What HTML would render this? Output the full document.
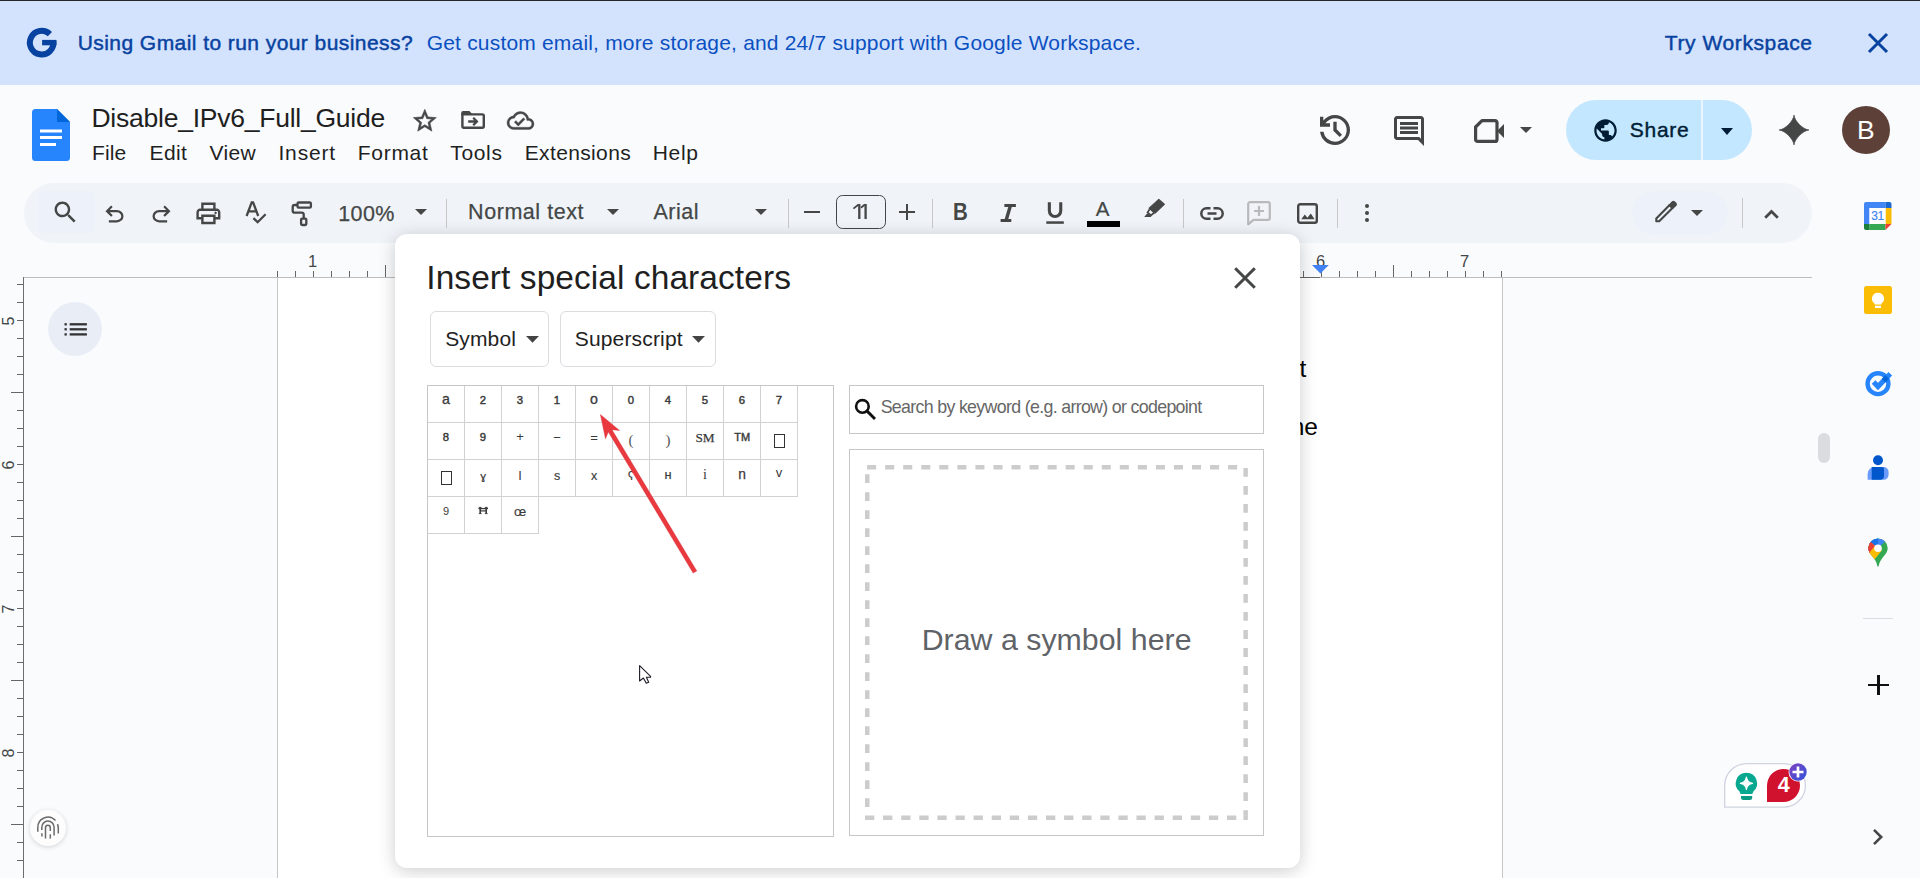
<!DOCTYPE html>
<html><head><meta charset="utf-8"><title>Disable_IPv6_Full_Guide - Google Docs</title>
<style>
html,body{margin:0;padding:0;}
body{width:1920px;height:878px;overflow:hidden;position:relative;background:#f9fbfd;font-family:"Liberation Sans",sans-serif;color:#1f1f1f;}
.abs{position:absolute;}
.t{position:absolute;white-space:nowrap;line-height:1;}
svg{position:absolute;overflow:visible;}
</style></head><body>

<div class="abs" style="left:0;top:0;width:1920px;height:85px;background:#d3e3fd;"></div>
<div class="abs" style="left:0;top:0;width:1920px;height:1px;background:#262626;"></div>
<svg style="left:0;top:0;" width="80" height="80"><path d="M49.900 34.200A11.800 11.800 0 1 0 53.350 40.900" fill="none" stroke="#0842a0" stroke-width="6"/><rect x="42.100" y="39.900" width="14.300" height="5.400" fill="#0842a0"/></svg>
<div class="t" id="b1" style="left:77.74px;top:32.22px;font-size:21px;color:#0842a0;letter-spacing:0.434px;-webkit-text-stroke:0.45px #0842a0;">Using Gmail to run your business?</div>
<div class="t" id="b2" style="left:426.74px;top:32.22px;font-size:21px;color:#0b50c0;letter-spacing:0.186px;">Get custom email, more storage, and 24/7 support with Google Workspace.</div>
<div class="t" id="b3" style="left:1664.74px;top:31.72px;font-size:21px;color:#0842a0;letter-spacing:0.598px;-webkit-text-stroke:0.45px #0842a0;">Try Workspace</div>
<svg style="left:1868px;top:33px;" width="20" height="20" viewBox="0 0 20 20"><path d="M1 1L19 19M19 1L1 19" stroke="#0842a0" stroke-width="3" fill="none"/></svg>
<svg style="left:32px;top:109px;" width="38" height="52" viewBox="0 0 38 52">
<path d="M3.500 0H25L38 13V48.500A3.500 3.500 0 0 1 34.500 52H3.500A3.500 3.500 0 0 1 0 48.500V3.500A3.500 3.500 0 0 1 3.500 0Z" fill="#2684fc"/>
<path d="M25 0L38 13H25Z" fill="#0066da"/>
<rect x="8" y="20.500" width="22" height="3" fill="#fff"/><rect x="8" y="27" width="22" height="3" fill="#fff"/><rect x="8" y="34" width="16" height="3" fill="#fff"/>
</svg>
<div class="t" id="title" style="left:91.41px;top:105.07px;font-size:26.5px;color:#1f1f1f;letter-spacing:-0.235px;">Disable_IPv6_Full_Guide</div>
<div class="t" id="m0" style="left:92.04px;top:141.92px;font-size:21px;color:#1f1f1f;letter-spacing:0.117px;">File</div>
<div class="t" id="m1" style="left:149.54px;top:141.92px;font-size:21px;color:#1f1f1f;letter-spacing:0.406px;">Edit</div>
<div class="t" id="m2" style="left:209.54px;top:141.92px;font-size:21px;color:#1f1f1f;letter-spacing:0.342px;">View</div>
<div class="t" id="m3" style="left:278.44px;top:141.92px;font-size:21px;color:#1f1f1f;letter-spacing:0.846px;">Insert</div>
<div class="t" id="m4" style="left:357.74px;top:141.92px;font-size:21px;color:#1f1f1f;letter-spacing:0.716px;">Format</div>
<div class="t" id="m5" style="left:450.24px;top:141.92px;font-size:21px;color:#1f1f1f;letter-spacing:0.656px;">Tools</div>
<div class="t" id="m6" style="left:524.74px;top:141.92px;font-size:21px;color:#1f1f1f;letter-spacing:0.358px;">Extensions</div>
<div class="t" id="m7" style="left:652.74px;top:141.92px;font-size:21px;color:#1f1f1f;letter-spacing:0.652px;">Help</div>
<svg style="left:411.300px;top:107px;" width="27.600" height="27.600" viewBox="0 0 24 24"><path fill="#444746" stroke="#444746" stroke-width="0.500" d="M22 9.24l-7.19-.62L12 2 9.19 8.63 2 9.24l5.46 4.73L5.82 21 12 17.27 18.18 21l-1.63-7.030L22 9.240zM12 15.400l-3.760 2.270 1-4.280-3.320-2.880 4.380-.380L12 6.100l1.710 4.040 4.380.380-3.320 2.880 1 4.280L12 15.400z"/></svg>
<svg style="left:0;top:0;" width="600" height="200"><path d="M462.400 114.400H482.300A1.500 1.500 0 0 1 483.800 115.900V126.200A1.500 1.500 0 0 1 482.300 127.700H463.900A1.500 1.500 0 0 1 462.400 126.200Z" fill="none" stroke="#444746" stroke-width="2.400"/><path d="M461.200 115V113A1.900 1.900 0 0 1 463.100 111.100H469.300L472.800 114.600V115Z" fill="#444746"/><path d="M468.200 121.500H476M473.200 117.800L476.900 121.500L473.200 125.200" fill="none" stroke="#444746" stroke-width="2.300"/></svg>
<svg style="left:507.400px;top:107.200px;" width="27" height="27" viewBox="0 0 24 24"><path fill="#444746" stroke="#444746" stroke-width="0.300" d="M19.35 10.04C18.67 6.59 15.64 4 12 4 9.11 4 6.6 5.64 5.35 8.04 2.34 8.36 0 10.91 0 14c0 3.31 2.69 6 6 6h13c2.76 0 5-2.24 5-5 0-2.64-2.05-4.78-4.65-4.96zM19 18H6c-2.21 0-4-1.79-4-4 0-2.05 1.53-3.76 3.56-3.97l1.07-.11.5-.95C8.08 7.140 9.940 6 12 6c2.620 0 4.880 1.860 5.390 4.430l.3 1.500 1.530.110c1.560.100 2.780 1.410 2.780 2.960 0 1.650-1.350 3-3 3zm-9-3.820l-2.090-2.090L6.500 13.500 10 17l6.010-6.010-1.410-1.410z"/></svg>
<svg style="left:1315px;top:110px;" width="40" height="40" viewBox="0 0 24 24"><path fill="#444746" d="M12 21q-3.45 0-6.012-2.287T3.050 13H5.100q.35 2.600 2.313 4.300T12 19q2.925 0 4.963-2.037T19 12t-2.037-4.963T12 5q-1.725 0-3.225.800T6.250 8H9v2H3V4h2v2.350q1.275-1.600 3.113-2.475T12 3q1.875 0 3.513.713t2.850 1.924 1.925 2.850T21 12t-.712 3.513-1.925 2.850-2.850 1.925T12 21m2.800-4.800L11 12.400V7h2v4.600l3.200 3.200z"/></svg>
<svg style="left:1391px;top:113px;" width="36" height="36" viewBox="0 0 24 24"><path fill="#444746" d="M6 14h12v-2H6zm0-3h12V9H6zm0-3h12V6H6zM22 22l-4-4H4q-.825 0-1.412-.587T2 16V4q0-.825.588-1.412T4 2h16q.825 0 1.413.588T22 4zM4 16h14.850L20 17.125V4H4z"/></svg>
<svg style="left:1474px;top:119px;" width="30" height="24" viewBox="0 0 30 24"><path d="M8 1.600H21A2 2 0 0 1 23 3.600V20.400A2 2 0 0 1 21 22.400H3.600A2 2 0 0 1 1.600 20.400V8Z" fill="none" stroke="#444746" stroke-width="3.200" stroke-linejoin="round"/><path d="M23 12L30 5V19Z" fill="#444746"/></svg>
<svg style="left:1520px;top:127px;" width="12" height="6" viewBox="0 0 12 6"><path d="M0 0H12L6 6Z" fill="#444746"/></svg>
<div class="abs" style="left:1566px;top:100px;width:186px;height:60px;border-radius:30px;background:#c2e7ff;"></div>
<div class="abs" style="left:1701px;top:100px;width:1.5px;height:60px;background:#eaf5ff;"></div>
<svg style="left:1591.5px;top:116.500px;" width="27" height="27" viewBox="0 0 24 24"><path fill="#001d35" d="M12 2C6.480 2 2 6.480 2 12s4.480 10 10 10 10-4.480 10-10S17.520 2 12 2zM4 12c0-.61.080-1.210.210-1.780L8.990 15v1c0 1.100.9 2 2 2v1.930C7.060 19.430 4 16.070 4 12zm13.890 5.400c-.26-.81-1-1.400-1.900-1.400h-1v-3c0-.55-.45-1-1-1h-6v-2h2c.55 0 1-.45 1-1V7h2c1.100 0 2-.9 2-2v-.410C17.920 5.770 20 8.650 20 12c0 2.080-.810 3.980-2.110 5.400z"/></svg>
<div class="t" id="share" style="left:1629.74px;top:118.72px;font-size:21px;color:#001d35;letter-spacing:0.733px;-webkit-text-stroke:0.4px #001d35;">Share</div>
<svg style="left:1721px;top:127.500px;" width="12" height="7" viewBox="0 0 12 7"><path d="M0 0H12L6 7Z" fill="#001d35"/></svg>
<svg style="left:1779px;top:115px;" width="30" height="30" viewBox="0 0 30 30"><path d="M15 0C15.90 6.40 23.60 14.10 30.00 15.00C23.60 15.90 15.90 23.60 15.00 30.00C14.10 23.60 6.40 15.90 0.00 15.00C6.40 14.10 14.10 6.40 15.00 0.00Z" fill="#444746" stroke="#444746" stroke-width="0.6" stroke-linejoin="round"/></svg>
<div class="abs" style="left:1842px;top:106px;width:48px;height:48px;border-radius:24px;background:#5d4037;"></div>
<div class="t" id="avB" style="left:1856.91px;top:117.27px;font-size:26.5px;color:#ffffff;letter-spacing:-0.273px;">B</div>
<div class="abs" style="left:24px;top:183px;width:1788px;height:60px;border-radius:30px;background:#f0f4f9;"></div>
<div class="abs" style="left:38px;top:191px;width:57px;height:42px;border-radius:6px;background:#edf2fa;"></div>
<div class="abs" style="left:1632px;top:191px;width:96px;height:44px;border-radius:22px;background:#edf2fa;"></div>
<svg style="left:51px;top:198px;" width="28.8" height="28.8" viewBox="0 0 24 24"><path fill="#444746"  d="M15.5 14h-.79l-.28-.27C15.41 12.59 16 11.11 16 9.5 16 5.91 13.09 3 9.5 3S3 5.91 3 9.5 5.91 16 9.5 16c1.61 0 3.09-.59 4.23-1.57l.27.28v.79l5 4.99L20.49 19l-4.99-5zm-6 0C7.01 14 5 11.99 5 9.5S7.01 5 9.5 5 14 7.01 14 9.5 11.990 14 9.500 14z"/></svg>
<svg style="left:100.9px;top:200.8px;" width="27" height="27" viewBox="0 0 24 24"><path fill="#444746"  d="M7 19v-2h7.1q1.575 0 2.737-1Q18 15 18 13.5T16.837 11Q15.675 10 14.1 10H7.8l2.6 2.6L9 14 4 9l5-5 1.4 1.4L7.8 8h6.3q2.425 0 4.163 1.575Q20 11.15 20 13.5q0 2.350-1.737 3.925Q16.525 19 14.100 19z"/></svg>
<svg style="left:148.4px;top:200.8px;" width="27" height="27" viewBox="0 0 24 24"><path fill="#444746"  d="M9.9 19q-2.425 0-4.163-1.575Q4 15.85 4 13.5q0-2.35 1.737-3.925Q7.475 8 9.9 8h6.3l-2.600-2.600L15 4l5 5-5 5-1.400-1.400 2.600-2.600H9.900q-1.575 0-2.737 1Q6 12 6 13.500T7.163 16q1.162 1 2.737 1H17v2z"/></svg>
<svg style="left:194.3px;top:199.09px;" width="28.8" height="28.8" viewBox="0 0 24 24"><path fill="#444746"  d="M16 8V5H8v3H6V3h12v5zM4 10h16H6zm14 2.5q.425 0 .713-.288T19 11.500t-.288-.712T18 10.500t-.712.288T17 11.500t.288.712.712.288M16 19v-4H8v4zm2 2H6v-4H2v-6q0-1.275.875-2.137T5 8h14q1.275 0 2.138.863T22 11v6h-4zm2-6v-4q0-.425-.288-.712T19 10H5q-.425 0-.712.288T4 11v4h2v-2h12v2z"/></svg>
<svg style="left:0;top:0;" width="400" height="260" fill="none" stroke="#444746" stroke-width="2.300"><path d="M246.600 216L251.700 202.300H253.100L258.200 216M248.600 211.300H256.200" stroke-linejoin="miter"/><path d="M253.400 218.200L257.600 222.200L265.600 214.200"/></svg>
<svg style="left:0;top:0;" width="400" height="260" fill="none" stroke="#444746" stroke-width="2.300"><rect x="297.500" y="202.500" width="13.400" height="5.200" rx="1.200"/><path d="M297.500 205H294.700A2 2 0 0 0 292.700 207V210.700A2 2 0 0 0 294.700 212.700H301.700A2 2 0 0 1 303.700 214.700V218"/><rect x="301.100" y="218.600" width="5.200" height="6.400" rx="1"/></svg>
<div class="t" id="zoom" style="left:338.31px;top:203.50px;font-size:21.5px;color:#444746;letter-spacing:0.366px;-webkit-text-stroke:0.25px #444746;">100%</div>
<svg style="left:414.5px;top:208.5px;" width="12" height="6" viewBox="0 0 12 6"><path d="M0 0H12L6 6Z" fill="#444746"/></svg>
<div class="abs" style="left:445.65px;top:198.5px;width:1.500px;height:29px;background:#c7c7c7;"></div>
<div class="t" id="ntext" style="left:468.11px;top:202.10px;font-size:21.5px;color:#444746;letter-spacing:0.549px;-webkit-text-stroke:0.25px #444746;">Normal text</div>
<svg style="left:606.7px;top:208.5px;" width="12" height="6" viewBox="0 0 12 6"><path d="M0 0H12L6 6Z" fill="#444746"/></svg>
<div class="t" id="arial" style="left:653.51px;top:202.10px;font-size:21.5px;color:#444746;letter-spacing:0.510px;-webkit-text-stroke:0.25px #444746;">Arial</div>
<svg style="left:754.7px;top:208.5px;" width="12" height="6" viewBox="0 0 12 6"><path d="M0 0H12L6 6Z" fill="#444746"/></svg>
<div class="abs" style="left:787.65px;top:198.5px;width:1.500px;height:29px;background:#c7c7c7;"></div>
<div class="abs" style="left:804px;top:210.750px;width:16px;height:2.300px;background:#444746;"></div>
<div class="abs" style="left:836px;top:195.250px;width:47.500px;height:32px;border:1.500px solid #444746;border-radius:6.500px;"></div>
<svg style="left:0;top:0;" width="1200" height="260" fill="none" stroke="#444746"><path d="M853.400 208.600L858.600 204.500M860.900 207.700L864.900 204.500" stroke-width="1.800"/><path d="M859.300 203.900V219M865.600 203.900V219" stroke-width="2.300"/></svg>
<div class="abs" style="left:899.400px;top:210.900px;width:15.400px;height:2.300px;background:#444746;"></div>
<div class="abs" style="left:905.950px;top:204.400px;width:2.300px;height:15.400px;background:#444746;"></div>
<div class="abs" style="left:931.85px;top:198.5px;width:1.500px;height:29px;background:#c7c7c7;"></div>
<div class="t" id="tbB" style="left:953.372px;top:200.25px;font-size:23.8px;color:#444746;letter-spacing:0.000px;font-weight:bold;transform:scaleX(0.860);transform-origin:0 0;">B</div>
<svg style="left:0;top:0;" width="1200" height="260" fill="none" stroke="#444746"><path d="M1004.400 205.450H1015.900M1000.600 220.450H1011.300" stroke-width="2.900"/><path d="M1010.600 205L1005.900 221" stroke-width="3.400"/><path d="M1049.350 202.300V210.800A5.700 5.700 0 0 0 1060.750 210.800V202.300" stroke-width="3.100"/><path d="M1046.300 222.550H1063.800" stroke-width="2.500"/></svg>
<div class="t" id="tbA" style="left:1095.77px;top:198.65px;font-size:20.5px;color:#444746;letter-spacing:0.000px;-webkit-text-stroke:0.2px #444746;">A</div>
<div class="abs" style="left:1087px;top:221px;width:33px;height:5.600px;background:#000;"></div>
<svg style="left:0;top:0;" width="1300" height="260"><path d="M1158.800 199.400L1164.300 204.300L1154.800 213.200L1149.200 208.200Z" fill="#444746" stroke="#444746" stroke-width="1.200" stroke-linejoin="round"/><path d="M1149.600 209.200L1147.600 212.300L1150.900 215.300L1153.800 213" fill="none" stroke="#444746" stroke-width="1.700"/><path d="M1147.200 213.200L1144.200 216.900H1150.800L1151.300 216Z" fill="#444746"/></svg>
<div class="abs" style="left:1182.75px;top:198.5px;width:1.500px;height:29px;background:#c7c7c7;"></div>
<svg style="left:1200px;top:206.500px;" width="24" height="13" viewBox="0 0 24 13"><path d="M10.500 1.300H6.500A5.200 5.200 0 0 0 6.500 11.700H10.500M13.500 1.300H17.500A5.200 5.200 0 0 1 17.500 11.700H13.500M7.500 6.500H16.500" fill="none" stroke="#444746" stroke-width="2.500"/></svg>
<svg style="left:1247px;top:201px;" width="24" height="24" viewBox="0 0 24 24"><path d="M1.200 3A1.800 1.800 0 0 1 3 1.200H21A1.800 1.800 0 0 1 22.800 3V17A1.800 1.800 0 0 1 21 18.800H6.500L1.200 23.300Z" fill="none" stroke="#b7b9ba" stroke-width="2.200" stroke-linejoin="round"/><path d="M12 5V15M7 10H17" stroke="#b7b9ba" stroke-width="2.200"/></svg>
<svg style="left:1297px;top:202.500px;" width="21" height="21" viewBox="0 0 21 21"><rect x="1.200" y="1.200" width="18.600" height="18.600" rx="2" fill="none" stroke="#444746" stroke-width="2.400"/><path d="M4.200 16.300L7.800 11.600L10.400 14.800L13.800 10.400L17.600 16.300Z" fill="#444746"/></svg>
<div class="abs" style="left:1336.85px;top:198.5px;width:1.500px;height:29px;background:#c7c7c7;"></div>
<div class="abs" style="left:1364.700px;top:203.7px;width:4.600px;height:4.600px;border-radius:2.300px;background:#444746;"></div>
<div class="abs" style="left:1364.700px;top:210.7px;width:4.600px;height:4.600px;border-radius:2.300px;background:#444746;"></div>
<div class="abs" style="left:1364.700px;top:217.7px;width:4.600px;height:4.600px;border-radius:2.300px;background:#444746;"></div>
<svg style="left:0;top:0;" width="1800" height="260"><path d="M1656.300 218.400L1669.600 205.100L1672.500 208L1659.200 221.300H1656.300Z" fill="none" stroke="#444746" stroke-width="2.100" stroke-linejoin="round"/><path d="M1669.600 205.100L1672.500 202.200A1.300 1.300 0 0 1 1674.300 202.200L1675.600 203.500A1.300 1.300 0 0 1 1675.600 205.300L1672.500 208Z" fill="#444746" stroke="#444746" stroke-width="2"  stroke-linejoin="round"/></svg>
<svg style="left:1691px;top:210px;" width="12" height="6" viewBox="0 0 12 6"><path d="M0 0H12L6 6Z" fill="#444746"/></svg>
<div class="abs" style="left:1741.75px;top:198px;width:1.500px;height:30px;background:#c7c7c7;"></div>
<svg style="left:1764px;top:209px;" width="15" height="10" viewBox="0 0 15 10"><path d="M1.200 8.800L7.500 2.500L13.800 8.800" fill="none" stroke="#444746" stroke-width="2.700"/></svg>
<div class="abs" style="left:278px;top:278px;width:1224px;height:600px;background:#fff;"></div>
<div class="abs" style="left:277px;top:278px;width:1px;height:600px;background:#c4c7c5;"></div>
<div class="abs" style="left:1502px;top:278px;width:1px;height:600px;background:#c4c7c5;"></div>
<div class="abs" style="left:23px;top:277px;width:1789px;height:1px;background:#bdbdbd;"></div>
<div class="abs" style="left:23px;top:277px;width:1px;height:601px;background:#6e6e6e;"></div>
<svg style="left:0;top:0;" width="1920" height="878" fill="#666" shape-rendering="crispEdges"><rect x="277" y="271" width="1" height="6"/><rect x="295" y="271" width="1" height="6"/><rect x="313" y="271" width="1" height="6"/><rect x="331" y="271" width="1" height="6"/><rect x="349" y="271" width="1" height="6"/><rect x="367" y="271" width="1" height="6"/><rect x="385" y="265" width="1" height="12"/><rect x="403" y="271" width="1" height="6"/><rect x="421" y="271" width="1" height="6"/><rect x="439" y="271" width="1" height="6"/><rect x="457" y="271" width="1" height="6"/><rect x="475" y="271" width="1" height="6"/><rect x="493" y="271" width="1" height="6"/><rect x="511" y="271" width="1" height="6"/><rect x="529" y="265" width="1" height="12"/><rect x="547" y="271" width="1" height="6"/><rect x="565" y="271" width="1" height="6"/><rect x="583" y="271" width="1" height="6"/><rect x="601" y="271" width="1" height="6"/><rect x="619" y="271" width="1" height="6"/><rect x="637" y="271" width="1" height="6"/><rect x="655" y="271" width="1" height="6"/><rect x="673" y="265" width="1" height="12"/><rect x="691" y="271" width="1" height="6"/><rect x="709" y="271" width="1" height="6"/><rect x="727" y="271" width="1" height="6"/><rect x="745" y="271" width="1" height="6"/><rect x="763" y="271" width="1" height="6"/><rect x="781" y="271" width="1" height="6"/><rect x="799" y="271" width="1" height="6"/><rect x="817" y="265" width="1" height="12"/><rect x="835" y="271" width="1" height="6"/><rect x="853" y="271" width="1" height="6"/><rect x="871" y="271" width="1" height="6"/><rect x="889" y="271" width="1" height="6"/><rect x="907" y="271" width="1" height="6"/><rect x="925" y="271" width="1" height="6"/><rect x="943" y="271" width="1" height="6"/><rect x="961" y="265" width="1" height="12"/><rect x="979" y="271" width="1" height="6"/><rect x="997" y="271" width="1" height="6"/><rect x="1015" y="271" width="1" height="6"/><rect x="1033" y="271" width="1" height="6"/><rect x="1051" y="271" width="1" height="6"/><rect x="1069" y="271" width="1" height="6"/><rect x="1087" y="271" width="1" height="6"/><rect x="1105" y="265" width="1" height="12"/><rect x="1123" y="271" width="1" height="6"/><rect x="1141" y="271" width="1" height="6"/><rect x="1159" y="271" width="1" height="6"/><rect x="1177" y="271" width="1" height="6"/><rect x="1195" y="271" width="1" height="6"/><rect x="1213" y="271" width="1" height="6"/><rect x="1231" y="271" width="1" height="6"/><rect x="1249" y="265" width="1" height="12"/><rect x="1267" y="271" width="1" height="6"/><rect x="1285" y="271" width="1" height="6"/><rect x="1303" y="271" width="1" height="6"/><rect x="1321" y="271" width="1" height="6"/><rect x="1339" y="271" width="1" height="6"/><rect x="1357" y="271" width="1" height="6"/><rect x="1375" y="271" width="1" height="6"/><rect x="1393" y="265" width="1" height="12"/><rect x="1411" y="271" width="1" height="6"/><rect x="1429" y="271" width="1" height="6"/><rect x="1447" y="271" width="1" height="6"/><rect x="1465" y="271" width="1" height="6"/><rect x="1483" y="271" width="1" height="6"/><rect x="1501" y="271" width="1" height="6"/></svg>
<svg style="left:0;top:0;" width="1920" height="878" fill="#666" shape-rendering="crispEdges"><rect x="17" y="284" width="6" height="1"/><rect x="17" y="302" width="6" height="1"/><rect x="17" y="320" width="6" height="1"/><rect x="17" y="338" width="6" height="1"/><rect x="17" y="356" width="6" height="1"/><rect x="17" y="374" width="6" height="1"/><rect x="11" y="392" width="12" height="1"/><rect x="17" y="410" width="6" height="1"/><rect x="17" y="428" width="6" height="1"/><rect x="17" y="446" width="6" height="1"/><rect x="17" y="464" width="6" height="1"/><rect x="17" y="482" width="6" height="1"/><rect x="17" y="500" width="6" height="1"/><rect x="17" y="518" width="6" height="1"/><rect x="11" y="536" width="12" height="1"/><rect x="17" y="554" width="6" height="1"/><rect x="17" y="572" width="6" height="1"/><rect x="17" y="590" width="6" height="1"/><rect x="17" y="608" width="6" height="1"/><rect x="17" y="626" width="6" height="1"/><rect x="17" y="644" width="6" height="1"/><rect x="17" y="662" width="6" height="1"/><rect x="11" y="680" width="12" height="1"/><rect x="17" y="698" width="6" height="1"/><rect x="17" y="716" width="6" height="1"/><rect x="17" y="734" width="6" height="1"/><rect x="17" y="752" width="6" height="1"/><rect x="17" y="770" width="6" height="1"/><rect x="17" y="788" width="6" height="1"/><rect x="17" y="806" width="6" height="1"/><rect x="11" y="824" width="12" height="1"/><rect x="17" y="842" width="6" height="1"/><rect x="17" y="860" width="6" height="1"/><rect x="17" y="878" width="6" height="1"/></svg>
<div class="t" style="left:312.5px;top:252.800px;width:20px;margin-left:-10px;text-align:center;font-size:16.500px;color:#444746;">1</div>
<div class="t" style="left:1320.5px;top:252.800px;width:20px;margin-left:-10px;text-align:center;font-size:16.500px;color:#444746;">6</div>
<div class="t" style="left:1464.5px;top:252.800px;width:20px;margin-left:-10px;text-align:center;font-size:16.500px;color:#444746;">7</div>
<div class="t" style="left:-1.500px;top:312.5px;width:20px;height:16px;text-align:center;font-size:16px;color:#444746;transform:rotate(-90deg);">5</div>
<div class="t" style="left:-1.500px;top:456.5px;width:20px;height:16px;text-align:center;font-size:16px;color:#444746;transform:rotate(-90deg);">6</div>
<div class="t" style="left:-1.500px;top:600.5px;width:20px;height:16px;text-align:center;font-size:16px;color:#444746;transform:rotate(-90deg);">7</div>
<div class="t" style="left:-1.500px;top:744.5px;width:20px;height:16px;text-align:center;font-size:16px;color:#444746;transform:rotate(-90deg);">8</div>
<div class="abs" style="left:1300px;top:277px;width:20px;height:1px;background:#666;"></div>
<svg style="left:1312.400px;top:264.800px;" width="16.800" height="8.600" viewBox="0 0 16.800 8.600"><path d="M0 0H16.800L8.400 8.600Z" fill="#3f80f2"/></svg>
<div class="t" id="dt1" style="left:1299.53px;top:357.46px;font-size:24.5px;color:#000;letter-spacing:0.000px;">t</div>
<div class="t" id="dt2" style="left:1290.73px;top:415.26px;font-size:24.5px;color:#000;letter-spacing:0.000px;">ne</div>
<div class="abs" style="left:48px;top:302px;width:54px;height:54px;border-radius:27px;background:#e9eef6;"></div>
<svg style="left:0;top:0;" width="100" height="400" fill="#333"><rect x="69.700" y="323.15" width="17.200" height="2.300"/><rect x="64.500" y="323.15" width="2.300" height="2.300"/><rect x="69.700" y="328.15" width="17.200" height="2.300"/><rect x="64.500" y="328.15" width="2.300" height="2.300"/><rect x="69.700" y="333.25" width="17.200" height="2.300"/><rect x="64.500" y="333.25" width="2.300" height="2.300"/></svg>
<div class="abs" style="left:30px;top:810px;width:36px;height:36px;border-radius:18px;background:#fdfdfd;box-shadow:0 1px 5px rgba(0,0,0,0.16);"></div>
<svg style="left:0;top:0;" width="100" height="878" fill="none" stroke="#6b6b6b" stroke-width="1.500">
<path d="M37.800 831.800V828A10.150 10.150 0 0 1 55.500 820.600"/>
<path d="M57.500 824.100Q58.300 826 58.300 828.500V833.600"/>
<path d="M41.800 830V827.200A6.150 6.150 0 0 1 54.100 827.200V835.600"/>
<path d="M41.900 833.300V836.600"/>
<path d="M45.500 838.600V827.600A2.400 2.400 0 0 1 50.300 827.600V831"/>
<path d="M50.300 834.300V838.600"/>
</svg>
<div class="abs" style="left:1818px;top:433px;width:12px;height:30px;border-radius:6px;background:#dadce0;"></div>
<svg style="left:1864px;top:202px;" width="27.500" height="28" viewBox="0 0 27.500 28">
<path d="M2 0H21.500V6H5.500V22H0V2A2 2 0 0 1 2 0Z" fill="#4285f4"/>
<path d="M21.500 0H25.500A2 2 0 0 1 27.500 2V6H21.500Z" fill="#1967d2"/>
<rect x="21.500" y="6" width="6" height="16" fill="#fbbc04"/>
<rect x="5.500" y="22" width="16" height="6" fill="#34a853"/>
<path d="M0 22H5.500V28H2A2 2 0 0 1 0 26Z" fill="#188038"/>
<path d="M21.500 22H27.500L21.500 28Z" fill="#ea4335"/>
<rect x="5.500" y="6" width="16" height="16" fill="#fff"/>
</svg>
<div class="t" style="left:1869.500px;top:209.500px;width:16px;text-align:center;font-size:12px;letter-spacing:-0.4px;color:#4285f4;-webkit-text-stroke:0.15px #4285f4;">31</div>
<svg style="left:1864px;top:286px;" width="28" height="28" viewBox="0 0 28 28"><rect width="28" height="28" rx="2.500" fill="#fbbc04"/><path d="M14 6.700A6 6 0 0 1 17.500 17.600V18.500H10.500V17.600A6 6 0 0 1 14 6.700Z" fill="#fff"/><rect x="11" y="19.700" width="6" height="2.300" fill="#fff"/></svg>
<svg style="left:1863px;top:369px;" width="30" height="30" viewBox="0 0 30 30"><circle cx="15" cy="14.700" r="10.400" fill="none" stroke="#2684fc" stroke-width="4.400"/><path d="M10.600 13L15 17.600L27.300 4.800" fill="none" stroke="#2684fc" stroke-width="5" /><path d="M20.600 11.800L24.200 8" fill="none" stroke="#0066da" stroke-width="5"/></svg>
<svg style="left:1866px;top:454px;" width="24" height="27" viewBox="0 0 24 27"><circle cx="12" cy="6.300" r="5" fill="#0057cc"/><path d="M8.600 13H17.600A5 5 0 0 1 22.600 18V21A5 5 0 0 1 17.600 25.800H1.600V20A7 7 0 0 1 8.600 13Z" fill="#6b9bfa"/><path d="M5.700 13H16A2 2 0 0 1 18 15V21.800A4 4 0 0 1 14 25.800H5.700Z" fill="#0057cc"/></svg>
<svg style="left:1868px;top:537.500px;" width="20" height="29" viewBox="0 0 20 29">
<defs><clipPath id="pin"><path d="M10 0.400A9.700 9.700 0 0 1 19.700 10.100C19.700 14.500 16.500 17.200 13.500 21.200C11.800 23.500 11 26 10.700 28C10.500 28.800 9.500 28.800 9.300 28C9 26 8.200 23.500 6.500 21.200C3.500 17.200 0.300 14.500 0.300 10.100A9.700 9.700 0 0 1 10 0.400Z"/></clipPath></defs>
<g clip-path="url(#pin)">
<rect width="20" height="29" fill="#34a853"/>
<path d="M-2 14L10 10.200L18.500 2L22 -2H-2Z" fill="#4285f4"/>
<path d="M-2 -2H10V10.200L2.500 3.500Z" fill="#1a73e8"/>
<path d="M2.600 3.700L10 10.200L0 18V3Z" fill="#ea4335"/>
<path d="M10 10.200L1 15.500L6.500 21.500L14 12Z" fill="#fbbc04"/>
<path d="M1.200 14.500L7 7.500L13 13L6.300 21Z" fill="#fbbc04"/>
<path d="M1.200 14.700L6.200 8.800L3 4.500L-1 10Z" fill="#ea4335"/>
</g>
<circle cx="10" cy="10.200" r="3.800" fill="#fff"/>
</svg>
<div class="abs" style="left:1863px;top:617.500px;width:30px;height:1.500px;background:#dadce0;"></div>
<div class="abs" style="left:1868px;top:683.700px;width:20.500px;height:2.600px;background:#111;"></div>
<div class="abs" style="left:1877px;top:674.700px;width:2.600px;height:20.500px;background:#111;"></div>
<svg style="left:1872px;top:828px;" width="12" height="18" viewBox="0 0 12 18"><path d="M2 1.800L9.200 9L2 16.200" fill="none" stroke="#444746" stroke-width="2.600"/></svg>
<svg style="left:0;top:0;" width="1920" height="878">
<defs><linearGradient id="pg" x1="0" y1="0" x2="1" y2="1"><stop offset="0" stop-color="#8140bf"/><stop offset="1" stop-color="#2f55dc"/></linearGradient></defs>
<path d="M1724.700 807.200V785.500A22 22 0 0 1 1746.700 763.600H1783.600A21.800 21.800 0 0 1 1805.400 785.400A21.800 21.800 0 0 1 1783.600 807.200Z" fill="#fff" stroke="#d0d3e0" stroke-width="1.300"/>
<path d="M1767 802V785.500A16.500 16.500 0 0 1 1783.500 769A16.500 16.500 0 0 1 1800 785.500A16.500 16.500 0 0 1 1783.500 802Z" fill="#d1122e"/>
<path d="M1746.400 772.800A10.600 10.600 0 0 1 1753.300 791.500L1752.300 794H1740.500L1739.500 791.500A10.600 10.600 0 0 1 1746.400 772.800Z" fill="#07a88f"/>
<path d="M1741 796H1752.200V797.600A2.500 2.500 0 0 1 1749.700 800.100H1743.500A2.500 2.500 0 0 1 1741 797.600Z" fill="#0b9a83"/>
<path d="M1746.400 777.200C1747 781.300 1748.500 782.800 1752.500 783.400C1748.500 784 1747 785.500 1746.400 789.300C1745.800 785.500 1744.300 784 1740.300 783.400C1744.300 782.800 1745.800 781.300 1746.400 777.200Z" fill="#fff" stroke="#fff" stroke-width="1.200" stroke-linejoin="round"/>
<circle cx="1798" cy="772" r="9.500" fill="#f9fbfd"/>
<circle cx="1798" cy="772" r="8.700" fill="url(#pg)"/>
<path d="M1798 766.500V777.500M1792.500 772H1803.500" stroke="#fff" stroke-width="2.700"/>
</svg>
<div class="t" style="left:1773.700px;top:775px;width:20px;text-align:center;font-size:21.500px;font-weight:bold;color:#fff;">4</div>
<div class="abs" style="left:395px;top:234px;width:905px;height:634px;border-radius:12px;background:#fff;box-shadow:0 3px 18px rgba(0,0,0,0.2);"></div>
<div class="t" id="dtitle" style="left:426.29px;top:260.64px;font-size:33.5px;color:#1f1f1f;letter-spacing:0.064px;">Insert special characters</div>
<svg style="left:1234px;top:267px;" width="22" height="22" viewBox="0 0 22 22"><path d="M1.200 1.200L20.800 20.800M20.800 1.200L1.200 20.800" stroke="#444746" stroke-width="3" fill="none"/></svg>
<div class="abs" style="left:430px;top:311px;width:117px;height:54px;border:1.500px solid #dadce0;border-radius:6px;"></div>
<div class="abs" style="left:560px;top:311px;width:154px;height:54px;border:1.500px solid #dadce0;border-radius:6px;"></div>
<div class="t" id="dd1" style="left:445.24px;top:327.72px;font-size:21px;color:#222;letter-spacing:0.130px;">Symbol</div>
<div class="t" id="dd2" style="left:574.74px;top:327.72px;font-size:21px;color:#222;letter-spacing:0.163px;">Superscript</div>
<svg style="left:526px;top:336px;" width="13" height="6.700" viewBox="0 0 13 6.700"><path d="M0 0H13L6.500 6.700Z" fill="#444"/></svg>
<svg style="left:691.500px;top:336px;" width="13" height="6.700" viewBox="0 0 13 6.700"><path d="M0 0H13L6.500 6.700Z" fill="#444"/></svg>
<div class="abs" style="left:427px;top:385px;width:404.500px;height:449.500px;border:1px solid #c6c6c6;"></div>
<svg style="left:0;top:0;" width="1920" height="878" fill="#d2d2d2"><rect x="464" y="386" width="1" height="148"/><rect x="501" y="386" width="1" height="148"/><rect x="538" y="386" width="1" height="148"/><rect x="575" y="386" width="1" height="111"/><rect x="612" y="386" width="1" height="111"/><rect x="649" y="386" width="1" height="111"/><rect x="686" y="386" width="1" height="111"/><rect x="723" y="386" width="1" height="111"/><rect x="760" y="386" width="1" height="111"/><rect x="797" y="386" width="1" height="111"/><rect x="428" y="422" width="370" height="1"/><rect x="428" y="459" width="370" height="1"/><rect x="428" y="496" width="370" height="1"/><rect x="428" y="533" width="111" height="1"/></svg>
<div class="t" style="left:446px;top:392.18px;width:60px;margin-left:-30px;text-align:center;font-size:14.2px;color:#3a3a3a;-webkit-text-stroke:0.3px #3a3a3a;">a</div>
<div class="t" style="left:483px;top:395.03px;width:60px;margin-left:-30px;text-align:center;font-size:11.3px;color:#3a3a3a;-webkit-text-stroke:0.45px #3a3a3a;">2</div>
<div class="t" style="left:520px;top:395.03px;width:60px;margin-left:-30px;text-align:center;font-size:11.3px;color:#3a3a3a;-webkit-text-stroke:0.45px #3a3a3a;">3</div>
<div class="t" style="left:557px;top:395.03px;width:60px;margin-left:-30px;text-align:center;font-size:11.3px;color:#3a3a3a;-webkit-text-stroke:0.45px #3a3a3a;">1</div>
<div class="t" style="left:594px;top:392.18px;width:60px;margin-left:-30px;text-align:center;font-size:14.2px;color:#3a3a3a;-webkit-text-stroke:0.3px #3a3a3a;">o</div>
<div class="t" style="left:631px;top:395.03px;width:60px;margin-left:-30px;text-align:center;font-size:11.3px;color:#3a3a3a;-webkit-text-stroke:0.45px #3a3a3a;">0</div>
<div class="t" style="left:668px;top:395.03px;width:60px;margin-left:-30px;text-align:center;font-size:11.3px;color:#3a3a3a;-webkit-text-stroke:0.45px #3a3a3a;">4</div>
<div class="t" style="left:705px;top:395.03px;width:60px;margin-left:-30px;text-align:center;font-size:11.3px;color:#3a3a3a;-webkit-text-stroke:0.45px #3a3a3a;">5</div>
<div class="t" style="left:742px;top:395.03px;width:60px;margin-left:-30px;text-align:center;font-size:11.3px;color:#3a3a3a;-webkit-text-stroke:0.45px #3a3a3a;">6</div>
<div class="t" style="left:779px;top:395.03px;width:60px;margin-left:-30px;text-align:center;font-size:11.3px;color:#3a3a3a;-webkit-text-stroke:0.45px #3a3a3a;">7</div>
<div class="t" style="left:446px;top:432.03px;width:60px;margin-left:-30px;text-align:center;font-size:11.3px;color:#3a3a3a;-webkit-text-stroke:0.45px #3a3a3a;">8</div>
<div class="t" style="left:483px;top:432.03px;width:60px;margin-left:-30px;text-align:center;font-size:11.3px;color:#3a3a3a;-webkit-text-stroke:0.45px #3a3a3a;">9</div>
<div class="t" style="left:520px;top:430.40px;width:60px;margin-left:-30px;text-align:center;font-size:13px;color:#3a3a3a;">+</div>
<div class="t" style="left:557px;top:431.00px;width:60px;margin-left:-30px;text-align:center;font-size:13px;color:#3a3a3a;">&#8722;</div>
<div class="t" style="left:594px;top:431.00px;width:60px;margin-left:-30px;text-align:center;font-size:13px;color:#3a3a3a;">=</div>
<div class="t" style="left:631px;top:432.54px;width:60px;margin-left:-30px;text-align:center;font-size:15px;color:#3a3a3a;font-family:'Liberation Serif',serif;color:#555;">(</div>
<div class="t" style="left:668px;top:432.54px;width:60px;margin-left:-30px;text-align:center;font-size:15px;color:#3a3a3a;font-family:'Liberation Serif',serif;color:#555;">)</div>
<div class="t" style="left:705px;top:430.96px;width:60px;margin-left:-30px;text-align:center;font-size:13.3px;color:#3a3a3a;font-family:'Liberation Serif',serif;-webkit-text-stroke:0.25px #3a3a3a;">SM</div>
<div class="t" style="left:742.2px;top:431.89px;width:60px;margin-left:-30px;text-align:center;font-size:11px;color:#3a3a3a;-webkit-text-stroke:0.4px #3a3a3a;">TM</div>
<div class="abs" style="left:774px;top:434px;width:9.300px;height:12.400px;border:1.300px solid #333;"></div>
<div class="abs" style="left:441px;top:471.200px;width:9.300px;height:12.200px;border:1.300px solid #333;"></div>
<div class="t" style="left:483.2px;top:470.48px;width:60px;margin-left:-30px;text-align:center;font-size:11.6px;color:#3a3a3a;-webkit-text-stroke:0.2px #3a3a3a;">&#611;</div>
<div class="t" style="left:520px;top:468.79px;width:60px;margin-left:-30px;text-align:center;font-size:13.6px;color:#3a3a3a;">l</div>
<div class="t" style="left:557px;top:469.52px;width:60px;margin-left:-30px;text-align:center;font-size:12.5px;color:#3a3a3a;-webkit-text-stroke:0.15px #3a3a3a;">s</div>
<div class="t" style="left:594px;top:469.52px;width:60px;margin-left:-30px;text-align:center;font-size:12.5px;color:#3a3a3a;-webkit-text-stroke:0.15px #3a3a3a;">x</div>
<div class="t" style="left:631px;top:468.74px;width:60px;margin-left:-30px;text-align:center;font-size:13.3px;color:#3a3a3a;">&#661;</div>
<div class="t" style="left:668px;top:468.96px;width:60px;margin-left:-30px;text-align:center;font-size:12.8px;color:#3a3a3a;-webkit-text-stroke:0.2px #3a3a3a;">&#1085;</div>
<div class="t" style="left:705px;top:468.07px;width:60px;margin-left:-30px;text-align:center;font-size:14px;color:#3a3a3a;font-family:'Liberation Serif',serif;">i</div>
<div class="t" style="left:742px;top:468.32px;width:60px;margin-left:-30px;text-align:center;font-size:13.8px;color:#3a3a3a;-webkit-text-stroke:0.25px #3a3a3a;">n</div>
<div class="t" style="left:779px;top:465.90px;width:60px;margin-left:-30px;text-align:center;font-size:13px;color:#3a3a3a;">v</div>
<div class="t" style="left:446px;top:505.99px;width:60px;margin-left:-30px;text-align:center;font-size:11px;color:#3a3a3a;">9</div>
<svg style="left:0;top:0;" width="600" height="600" fill="none" stroke="#3a3a3a"><path d="M480.200 507.200V513.800M486.200 507.200V513.800" stroke-width="1.600"/><path d="M480.200 510.900H486.200" stroke-width="1.200"/><path d="M478.400 508.600H488" stroke-width="1.200"/><path d="M478.800 507.400H481.600M484.800 507.400H487.600M478.800 513.600H481.600M484.800 513.600H487.600" stroke-width="0.900"/></svg>
<div class="t" style="left:520px;top:506.28px;width:60px;margin-left:-30px;text-align:center;font-size:12.9px;color:#3a3a3a;-webkit-text-stroke:0.15px #3a3a3a;">&#339;</div>
<svg style="left:0;top:0;" width="1920" height="878"><path d="M600.40 414.50 L619.53 430.43 L612.02 429.68 L696.79 570.89 L693.11 573.11 L608.34 431.90 L605.46 438.87 Z" fill="#ea383f" stroke="#d4363c" stroke-width="0.400" stroke-linejoin="round"/></svg>
<div class="abs" style="left:849px;top:385px;width:412.500px;height:46.500px;border:1px solid #c6c6c6;"></div>
<svg style="left:854px;top:398px;" width="22" height="22" viewBox="0 0 22 22"><circle cx="8.400" cy="8.400" r="6.300" fill="none" stroke="#111" stroke-width="2.600"/><path d="M12.900 12.900L21 21" stroke="#111" stroke-width="2.900"/></svg>
<div class="t" id="srch" style="left:880.632px;top:398.63px;font-size:17.8px;color:#666;letter-spacing:-0.672px;">Search by keyword (e.g. arrow) or codepoint</div>
<div class="abs" style="left:849px;top:449px;width:412.500px;height:384.500px;border:1px solid #c6c6c6;"></div>
<svg style="left:0;top:0;" width="1920" height="878" fill="none" stroke="#cccccc" stroke-width="4.500">
<path d="M867.100 467.250H1240" stroke-dasharray="9.050 9"/>
<path d="M867.250 474.200V810" stroke-dasharray="8.700 9.300"/>
<path d="M1245.650 467.900V815.700" stroke-dasharray="8.800 9.220"/>
<path d="M865 817.800H1240" stroke-dasharray="9.300 8.800"/>
<path d="M1243.400 817.800H1247.900" />
</svg>
<div class="t" id="draw" style="left:921.682px;top:625.15px;font-size:30.3px;color:#5f6368;letter-spacing:0.024px;">Draw a symbol here</div>
<svg style="left:0;top:0;" width="700" height="700"><path d="M639.600 665.700V681L643.400 678L646.300 683.300L648.700 682.200L646.400 677.300H650.600V676.300Z" fill="#fff" stroke="#1c1c28" stroke-width="1.100" stroke-linejoin="round"/></svg>
</body></html>
